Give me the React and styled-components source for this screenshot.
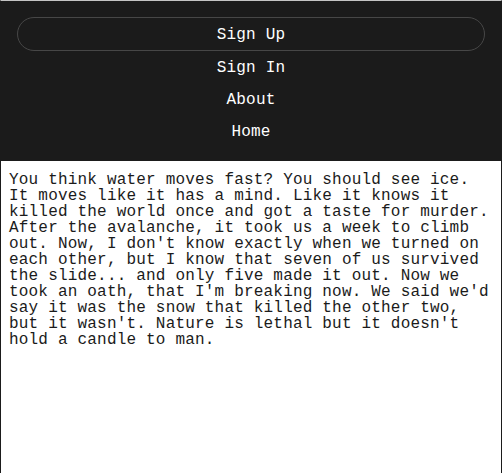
import styled, { createGlobalStyle } from "styled-components";

const GlobalStyle = createGlobalStyle`
  html, body {
    margin: 0;
    padding: 0;
    background: #ffffff;
  }
  body {
    font-family: "Liberation Mono", "DejaVu Sans Mono", monospace;
  }
`;

const navItems = ["Sign Up", "Sign In", "About", "Home"];

const story =
  "You think water moves fast? You should see ice. It moves like it has a mind. Like it knows it killed the world once and got a taste for murder. After the avalanche, it took us a week to climb out. Now, I don't know exactly when we turned on each other, but I know that seven of us survived the slide... and only five made it out. Now we took an oath, that I'm breaking now. We said we'd say it was the snow that killed the other two, but it wasn't. Nature is lethal but it doesn't hold a candle to man.";

const App = () => {
  return (
    <Frame>
      <GlobalStyle />
      <Header>
        <Nav>
          {navItems.map((item, i) => (
            <NavLink key={item} $outlined={i === 0}>
              {item}
            </NavLink>
          ))}
        </Nav>
      </Header>
      <Main>
        <Story>{story}</Story>
      </Main>
    </Frame>
  );
};

export default App;

const Frame = styled.div`
  display: flex;
  flex-direction: column;
  min-height: 100vh;
  box-sizing: border-box;
  border-top: 1px solid #c4c4c4;
  border-left: 1px solid #1b1b1b;
  border-right: 1px solid #1b1b1b;
`;

const Header = styled.header`
  background-color: #1b1b1b;
  padding: 16px 16px 14px;
`;

const Nav = styled.nav`
  display: flex;
  flex-direction: column;
`;

const NavLink = styled.a`
  display: block;
  padding: 9px 0 7px;
  border: ${(p) => (p.$outlined ? "1px solid #474747" : "none")};
  border-radius: 17px;
  color: #ffffff;
  font-size: 16px;
  line-height: 16px;
  letter-spacing: 0.19px;
  text-align: center;
  cursor: pointer;
`;

const Main = styled.main`
  flex: 1;
  padding: 11px 8px 7px;
  background: #ffffff;
`;

const Story = styled.p`
  margin: 0;
  color: #1b1b1b;
  font-size: 16px;
  line-height: 16px;
  letter-spacing: 0.19px;
`;
